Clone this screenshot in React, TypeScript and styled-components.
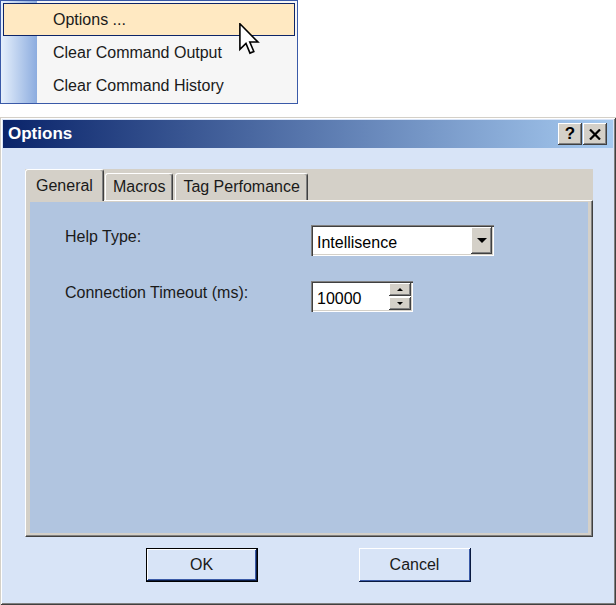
import React from 'react';
import styled, { createGlobalStyle, css } from 'styled-components';

const GlobalStyle = createGlobalStyle`
  html, body {
    margin: 0;
    padding: 0;
    background: #ffffff;
  }

  body {
    font-family: "Liberation Sans", Arial, sans-serif;
    color: #000000;
  }
`;

const Page = styled.div`
  width: 616px;
  height: 605px;
  display: flex;
  flex-direction: column;
  overflow: hidden;
`;

// context menu -------------------------------------------------------------

const PopupMenu = styled.div`
  position: relative;
  box-sizing: border-box;
  width: 298px;
  height: 104px;
  padding: 2px 2px 0;
  border: 1px solid #3a5aa8;
  background: linear-gradient(to right, #e6f0fc, #8cacdf) no-repeat 0 0 / 36px 100%, #f6f6f6;
  display: flex;
  flex-direction: column;
`;

const MenuItem = styled.div<{ $active?: boolean }>`
  box-sizing: border-box;
  height: 33px;
  padding-left: 49px;
  display: flex;
  align-items: center;
  font-size: 16px;
  color: #1a1a1a;
  border: 1px solid transparent;

  ${({ $active }) => $active && css`
    background: #ffe9c2;
    border-color: #0d2568;
  `}
`;

const Pointer = styled.svg`
  position: absolute;
  left: 238px;
  top: 22px;
`;

// dialog -------------------------------------------------------------------

const Dialog = styled.div`
  box-sizing: border-box;
  margin-top: 13px;
  width: 616px;
  height: 488px;
  padding: 3px 3px 4px;
  background: #d8e4f7;
  box-shadow:
    inset 1px 1px #d4d0c8,
    inset -1px -1px #404040,
    inset 2px 2px #ffffff,
    inset -2px -2px #808080;
  display: flex;
  flex-direction: column;
`;

const TitleBar = styled.div`
  height: 28px;
  padding: 0 6px 0 5px;
  display: flex;
  align-items: center;
  justify-content: space-between;
  background: linear-gradient(to right, #0a246a, #a6caf0);
`;

const Title = styled.div`
  color: #ffffff;
  font-weight: bold;
  font-size: 17px;
`;

const CaptionButtons = styled.div`
  display: flex;
  gap: 1px;
`;

const CaptionButton = styled.div`
  box-sizing: border-box;
  width: 24px;
  height: 22px;
  background: #d4d0c8;
  display: flex;
  align-items: center;
  justify-content: center;
  font-weight: bold;
  font-size: 17px;
  color: #000000;
  box-shadow:
    inset -1px -1px #404040,
    inset 1px 1px #ffffff,
    inset -2px -2px #808080;
`;

const DialogBody = styled.div`
  flex: 1;
  padding: 21px 20px 18px 22px;
  display: flex;
  flex-direction: column;
`;

const TabControl = styled.div`
  display: flex;
  flex-direction: column;
  height: 368px;
`;

const TabStrip = styled.div`
  height: 31px;
  background: #d4d0c8;
  display: flex;
  align-items: flex-end;
  position: relative;
  z-index: 1;
`;

const Tab = styled.div<{ $selected?: boolean }>`
  box-sizing: border-box;
  height: ${({ $selected }) => ($selected ? '32px' : '27px')};
  margin-bottom: ${({ $selected }) => ($selected ? '-1px' : '0')};
  margin-right: ${({ $selected }) => ($selected ? '1px' : '2px')};
  padding: 0 ${({ $selected }) => ($selected ? '10px' : '7px')};
  display: flex;
  align-items: center;
  font-size: 16px;
  color: #1a1a1a;
  background: #d4d0c8;
  border-top: 1px solid #ffffff;
  border-left: 1px solid #ffffff;
  border-right: 1px solid #404040;
  border-radius: 3px 3px 0 0;
  box-shadow: inset -1px 0 #808080;
`;

const TabFrame = styled.div`
  flex: 1;
  box-sizing: border-box;
  padding: 1px 4px 3px 4px;
  background: #d4d0c8;
  border-top: 1px solid #ffffff;
  border-left: 1px solid #ffffff;
  border-right: 1px solid #404040;
  border-bottom: 1px solid #404040;
  box-shadow: inset -1px -1px #808080;
  display: flex;
`;

const TabPage = styled.div`
  flex: 1;
  background: #b1c5e0;
  padding: 23px 0 0 35px;
  display: grid;
  grid-template-columns: 246px auto;
  grid-auto-rows: 31px;
  row-gap: 25px;
  align-content: start;
`;

const FieldLabel = styled.div`
  font-size: 16px;
  color: #1a1a1a;
  padding-top: 3px;
  line-height: 18px;
`;

const Sunken = styled.div<{ $width: number }>`
  box-sizing: border-box;
  width: ${({ $width }) => $width}px;
  height: 31px;
  padding: 2px;
  background: #ffffff;
  box-shadow:
    inset 1px 1px #808080,
    inset 2px 2px #404040,
    inset -1px -1px #ffffff,
    inset -2px -2px #d4d0c8;
  display: flex;
  align-items: stretch;
`;

const FieldText = styled.div`
  flex: 1;
  display: flex;
  align-items: center;
  padding-left: 4px;
  padding-top: 4px;
  font-size: 16px;
  color: #000000;
`;

const ArrowButton = styled.div`
  box-sizing: border-box;
  width: 21px;
  background: #d4d0c8;
  display: flex;
  align-items: center;
  justify-content: center;
  box-shadow:
    inset -1px -1px #404040,
    inset 1px 1px #ffffff,
    inset -2px -2px #808080;
`;

const SpinButtons = styled.div`
  width: 22px;
  display: flex;
  flex-direction: column;
  gap: 1px;
`;

const SpinButton = styled(ArrowButton)`
  width: 22px;
  flex: 1;
`;

const ButtonRow = styled.div`
  margin-top: 11px;
  display: flex;
  justify-content: center;
  gap: 101px;
  padding-right: 2px;
`;

const PushButton = styled.button<{ $default?: boolean }>`
  box-sizing: border-box;
  width: 112px;
  height: 34px;
  padding: 0;
  font-family: "Liberation Sans", Arial, sans-serif;
  font-size: 16px;
  color: #1a1a1a;
  background: #d8e4f7;
  border: none;
  box-shadow:
    inset -1px -1px #0a1a40,
    inset 1px 1px #ffffff,
    inset -2px -2px #3a5aa8;

  ${({ $default }) => $default && css`
    border: 1px solid #000000;
  `}
`;

const Triangle = ({ size, up }: { size: number; up?: boolean }) => (
  <svg width={size * 2} height={size} viewBox={`0 0 ${size * 2} ${size}`}>
    <path
      d={up ? `M0 ${size} L${size * 2} ${size} L${size} 0 Z` : `M0 0 L${size * 2} 0 L${size} ${size} Z`}
      fill='#000000'
    />
  </svg>
);

export default function App () {
  return (
    <>
      <GlobalStyle />
      <Page>
        <PopupMenu>
          <MenuItem $active>Options ...</MenuItem>
          <MenuItem>Clear Command Output</MenuItem>
          <MenuItem>Clear Command History</MenuItem>
          <Pointer width='21' height='32' viewBox='0 0 13 20'>
            <path
              d='M0.5 0.5 L0.5 16.5 L4.3 12.8 L6.8 18.8 L9.2 17.8 L6.7 11.9 L11.8 11.9 Z'
              fill='#ffffff'
              stroke='#000000'
              strokeWidth='1'
              strokeLinejoin='miter'
            />
          </Pointer>
        </PopupMenu>

        <Dialog>
          <TitleBar>
            <Title>Options</Title>
            <CaptionButtons>
              <CaptionButton>?</CaptionButton>
              <CaptionButton>
                <svg width='12' height='11' viewBox='0 0 12 11'>
                  <path d='M1 0.5 L11 10.5 M11 0.5 L1 10.5' stroke='#000000' strokeWidth='2.2' />
                </svg>
              </CaptionButton>
            </CaptionButtons>
          </TitleBar>

          <DialogBody>
            <TabControl>
              <TabStrip>
                <Tab $selected>General</Tab>
                <Tab>Macros</Tab>
                <Tab>Tag Perfomance</Tab>
              </TabStrip>
              <TabFrame>
                <TabPage>
                  <FieldLabel>Help Type:</FieldLabel>
                  <Sunken $width={183}>
                    <FieldText>Intellisence</FieldText>
                    <ArrowButton>
                      <Triangle size={5} />
                    </ArrowButton>
                  </Sunken>

                  <FieldLabel>Connection Timeout (ms):</FieldLabel>
                  <Sunken $width={102}>
                    <FieldText>10000</FieldText>
                    <SpinButtons>
                      <SpinButton>
                        <Triangle size={3} up />
                      </SpinButton>
                      <SpinButton>
                        <Triangle size={3} />
                      </SpinButton>
                    </SpinButtons>
                  </Sunken>
                </TabPage>
              </TabFrame>
            </TabControl>

            <ButtonRow>
              <PushButton $default>OK</PushButton>
              <PushButton>Cancel</PushButton>
            </ButtonRow>
          </DialogBody>
        </Dialog>
      </Page>
    </>
  );
}
